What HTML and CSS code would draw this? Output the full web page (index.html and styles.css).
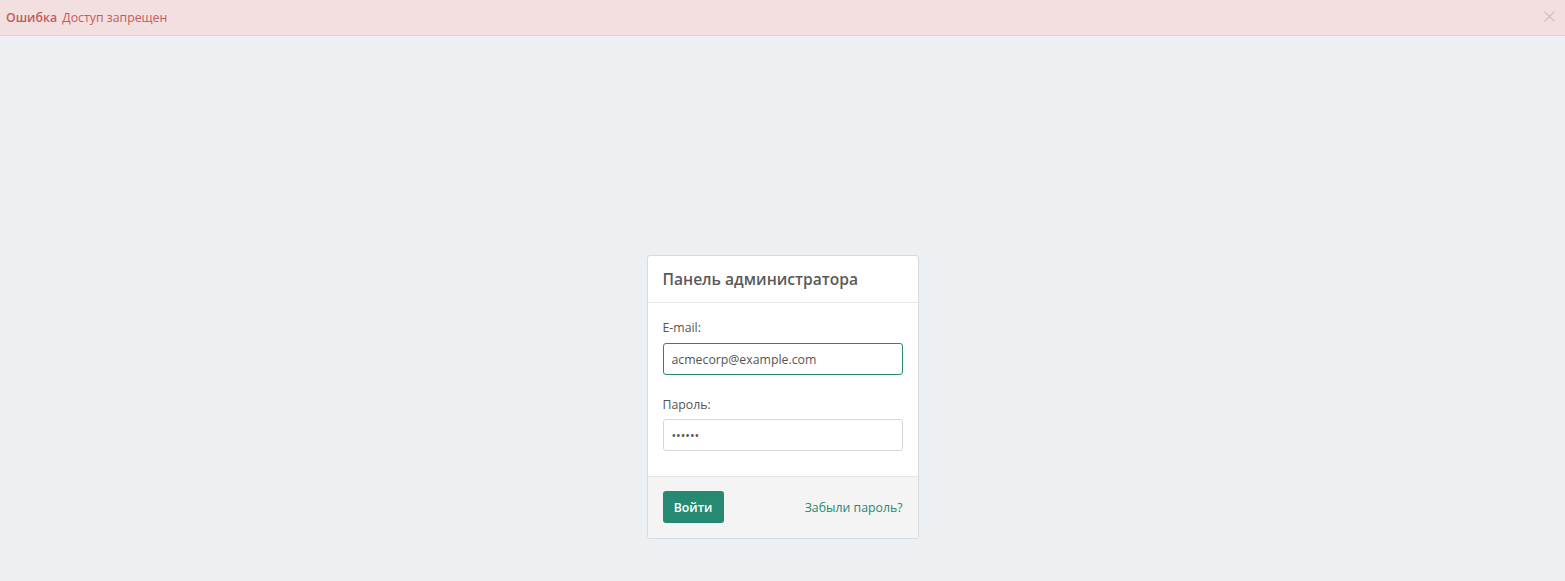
FILE: index.html
```html
<!DOCTYPE html>
<html lang="ru">
<head>
<meta charset="utf-8">
<title>Панель администратора</title>
<link rel="stylesheet" href="styles.css">
</head>
<body>
<div class="alert">
  <div class="alert-text"><strong>Ошибка</strong> Доступ запрещен</div>
  <span class="alert-close">
    <svg width="11" height="11" viewBox="0 0 11 11"><path d="M0.5 0.5L10.5 10.5M10.5 0.5L0.5 10.5" stroke="currentColor" stroke-width="1.2" fill="none"/></svg>
  </span>
</div>
<main class="page">
  <form class="card">
    <div class="card-header">Панель администратора</div>
    <div class="card-body">
      <div class="form-group">
        <label class="label">E-mail:</label>
        <input class="input input-focus" type="text" value="acmecorp@example.com">
      </div>
      <div class="form-group last">
        <label class="label">Пароль:</label>
        <input class="input" type="password" value="secret">
      </div>
    </div>
    <div class="card-footer">
      <button class="btn" type="button">Войти</button>
      <a class="link" href="#">Забыли пароль?</a>
    </div>
  </form>
</main>
</body>
</html>
```
FILE: styles.css
```css
* { box-sizing: border-box; }
html, body { margin: 0; padding: 0; }
body {
  background: #edf0f3;
  font-family: "Open Sans", "Liberation Sans", sans-serif;
  font-size: 12.3px;
  color: #555;
  height: 581px;
  overflow: hidden;
}
.alert {
  height: 36px;
  background: #f2dfdf;
  border-bottom: 1px solid #ebd0d0;
  color: #c45b5a;
  display: flex;
  align-items: center;
  justify-content: space-between;
  padding: 0 10px 0 6px;
}
.alert-text strong { font-weight: 600; margin-right: 2px; }
.alert-close { color: #d6bdbd; display: flex; margin-top: -2px; }
.page {
  display: flex;
  justify-content: center;
  padding-top: 219px;
}
.card {
  width: 272px;
  background: #fff;
  border: 1px solid #d6dbe0;
  border-radius: 3px;
}
.card-header {
  padding: 14px 15px 14px;
  font-size: 15.6px;
  font-weight: 600;
  line-height: 18px;
  color: #5a5a5a;
  border-bottom: 1px solid #e6e9ec;
}
.card-body { padding: 15px 15px 25px; }
.form-group { margin-bottom: 20px; }
.form-group.last { margin-bottom: 0; }
.label {
  display: block;
  line-height: 20px;
  margin-bottom: 5px;
  color: #555;
}
.form-group.last .label { margin-top: 1px; margin-bottom: 4px; }
.input {
  display: block;
  width: 240px;
  height: 32px;
  border: 1px solid #d3d8dd;
  border-radius: 3px;
  padding: 0 8px;
  font-family: inherit;
  font-size: 12.3px;
  color: #555;
  background: #fff;
  outline: none;
}
.input-focus { border-color: #268a73; }
.card-footer {
  background: #f4f4f4;
  border-top: 1px solid #e6e6e6;
  padding: 14px 15px 15px;
  display: flex;
  align-items: center;
  justify-content: space-between;
  border-radius: 0 0 3px 3px;
}
.btn {
  background: #268a73;
  color: #fff;
  border: none;
  border-radius: 3px;
  height: 32px;
  width: 61px;
  font-family: inherit;
  font-size: 12.3px;
  font-weight: 600;
  padding: 0;
}
.link {
  color: #268a73;
  text-decoration: none;
}
```
